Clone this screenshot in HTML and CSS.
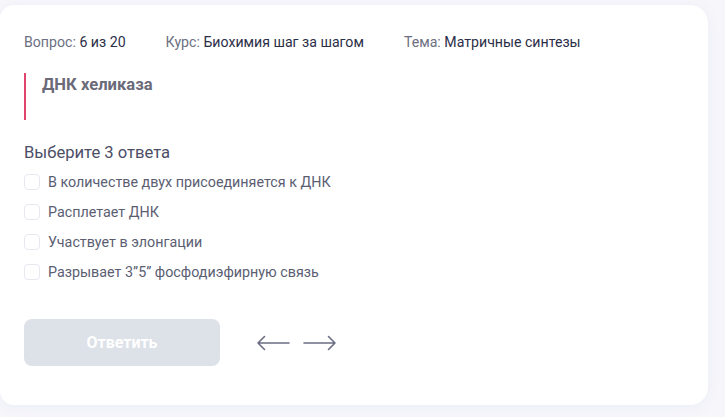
FILE: index.html
```html
<!DOCTYPE html>
<html lang="ru">
<head>
<meta charset="utf-8">
<link rel="stylesheet" href="styles.css">
</head>
<body>
<div class="card">
  <div class="meta">
    <span class="meta-item"><span class="label">Вопрос:</span> <span class="value">6 из 20</span></span>
    <span class="meta-item"><span class="label">Курс:</span> <span class="value">Биохимия шаг за шагом</span></span>
    <span class="meta-item"><span class="label">Тема:</span> <span class="value">Матричные синтезы</span></span>
  </div>
  <div class="question">ДНК хеликаза</div>
  <div class="hint">Выберите 3 ответа</div>
  <ul class="options">
    <li class="option"><span class="box"></span>В количестве двух присоединяется к ДНК</li>
    <li class="option"><span class="box"></span>Расплетает ДНК</li>
    <li class="option"><span class="box"></span>Участвует в элонгации</li>
    <li class="option"><span class="box"></span>Разрывает 3”5” фосфодиэфирную связь</li>
  </ul>
  <div class="actions">
    <button class="submit">Ответить</button>
    <div class="nav">
      <svg class="arrow" width="34" height="16" viewBox="0 0 34 16"><path d="M33 8H2M8.5 1.5L2 8l6.5 6.5" fill="none" stroke="#6b6e85" stroke-width="1.6" stroke-linecap="round" stroke-linejoin="round"/></svg>
      <svg class="arrow" width="34" height="16" viewBox="0 0 34 16"><path d="M1 8h31M25.5 1.5L32 8l-6.5 6.5" fill="none" stroke="#6b6e85" stroke-width="1.6" stroke-linecap="round" stroke-linejoin="round"/></svg>
    </div>
  </div>
</div>
</body>
</html>
```
FILE: styles.css
```css
html, body {
  margin: 0;
  padding: 0;
}
body {
  background: #f6f6fb;
  font-family: Roboto, "Liberation Sans", sans-serif;
  width: 725px;
  height: 417px;
  overflow: hidden;
}
.card {
  margin-top: 5px;
  width: 708px;
  height: 400px;
  box-sizing: border-box;
  background: #ffffff;
  border-radius: 14px 18px 18px 14px;
  box-shadow: 0 2px 14px rgba(120, 120, 190, 0.07);
  padding: 29px 24px 0 24px;
}
.meta {
  display: flex;
  gap: 40px;
  font-size: 14.15px;
  line-height: 16px;
}
.label { color: #6c6f82; }
.value { color: #2b2e48; }
.question {
  margin-top: 23px;
  height: 47px;
  box-sizing: border-box;
  border-left: 2px solid #e0436c;
  padding: 2px 0 0 16px;
  font-size: 16.6px;
  line-height: 20px;
  font-weight: 700;
  color: #6b6a79;
}
.hint {
  margin-top: 23px;
  font-size: 16.6px;
  line-height: 20px;
  color: #4b4e66;
}
.options {
  list-style: none;
  margin: 4px 0 0 0;
  padding: 0;
}
.option {
  display: flex;
  align-items: center;
  height: 30px;
  font-size: 14.3px;
  color: #5b5e72;
}
.box {
  width: 14px;
  height: 14px;
  border: 1px solid #e6e8ee;
  border-radius: 4px;
  margin-right: 8px;
  background: #fff;
}
.actions {
  margin-top: 32px;
  display: flex;
  align-items: center;
  gap: 36px;
}
.submit {
  width: 196px;
  height: 47px;
  border: none;
  border-radius: 8px;
  background: #dde1e8;
  color: #ffffff;
  font-family: Roboto, "Liberation Sans", sans-serif;
  font-size: 16px;
  font-weight: 700;
}
.nav {
  display: flex;
  gap: 13px;
  padding-top: 1px;
}
.arrow { display: block; }
```
